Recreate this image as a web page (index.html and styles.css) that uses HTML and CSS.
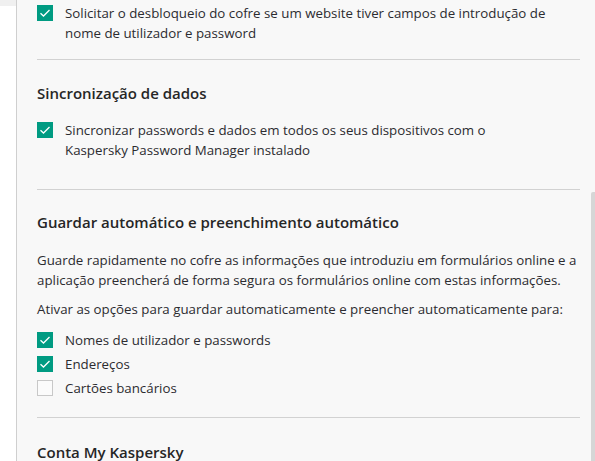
FILE: index.html
```html
<!DOCTYPE html>
<html lang="pt">
<head>
<meta charset="utf-8">
<link rel="stylesheet" href="styles.css">
</head>
<body>
<div class="app">
  <aside class="side"><div class="side-top"></div></aside>
  <main class="main">
    <label class="check row-first">
      <span class="box on"><svg viewBox="0 0 16 16"><path d="M3.5 8.2l3 2.8 6-6" /></svg></span>
      <span class="txt">Solicitar o desbloqueio do cofre se um website tiver campos de introdução de nome de utilizador e password</span>
    </label>
    <hr class="div div1">
    <h2 class="head h-sync">Sincronização de dados</h2>
    <label class="check">
      <span class="box on"><svg viewBox="0 0 16 16"><path d="M3.5 8.2l3 2.8 6-6" /></svg></span>
      <span class="txt">Sincronizar passwords e dados em todos os seus dispositivos com o Kaspersky Password Manager instalado</span>
    </label>
    <hr class="div div2">
    <h2 class="head h-auto">Guardar automático e preenchimento automático</h2>
    <p class="para p1">Guarde rapidamente no cofre as informações que introduziu em formulários online e a aplicação preencherá de forma segura os formulários online com estas informações.</p>
    <p class="para p2">Ativar as opções para guardar automaticamente e preencher automaticamente para:</p>
    <div class="list">
      <label class="check">
        <span class="box on"><svg viewBox="0 0 16 16"><path d="M3.5 8.2l3 2.8 6-6" /></svg></span>
        <span class="txt">Nomes de utilizador e passwords</span>
      </label>
      <label class="check">
        <span class="box on"><svg viewBox="0 0 16 16"><path d="M3.5 8.2l3 2.8 6-6" /></svg></span>
        <span class="txt">Endereços</span>
      </label>
      <label class="check">
        <span class="box off"></span>
        <span class="txt">Cartões bancários</span>
      </label>
    </div>
    <hr class="div div3">
    <h2 class="head h-acc">Conta My Kaspersky</h2>
  </main>
  <div class="scroll"></div>
</div>
</body>
</html>
```
FILE: styles.css
```css
html, body {
  margin: 0;
  padding: 0;
  height: 100%;
  overflow: hidden;
}
body {
  font-family: "Open Sans", "Noto Sans", sans-serif;
  color: #2c2c30;
  background: #f8f8f8;
}
.app {
  display: flex;
  height: 461px;
  position: relative;
}
.side {
  width: 16px;
  flex: 0 0 16px;
  background: #ffffff;
  border-right: 1px solid #cfcfcf;
}
.side-top {
  height: 6px;
  background: #f0f0f0;
}
.main {
  flex: 1;
  background: #f8f8f8;
  padding: 3px 15px 0 20px;
  display: flex;
  flex-direction: column;
}
.check {
  display: flex;
  align-items: flex-start;
  gap: 12px;
  font-size: 13.3px;
  line-height: 20px;
}
.box {
  flex: 0 0 16px;
  width: 16px;
  height: 16px;
  margin-top: 2px;
  box-sizing: border-box;
  display: flex;
}
.box.on {
  background: #009b82;
}
.box.off {
  border: 1px solid #c8c8c8;
  background: #fbfbfb;
}
.box svg {
  width: 16px;
  height: 16px;
}
.box path {
  fill: none;
  stroke: #ffffff;
  stroke-width: 1.3;
}
.txt {
  flex: 0 1 auto;
  max-width: 484px;
}
.div {
  border: 0;
  border-top: 1px solid #d2d2d2;
  margin: 0;
  height: 0;
}
.div1 { margin-top: 16px; }
.div2 { margin-top: 29px; }
.div3 { margin-top: 19px; }
.head {
  margin: 0;
  font-size: 15px;
  font-weight: 600;
  line-height: 22px;
  color: #262626;
}
.h-sync { margin-top: 22px; margin-bottom: 16px; }
.h-auto { margin-top: 21px; }
.h-acc { margin-top: 23px; }
.para {
  margin: 0;
  font-size: 13.3px;
  line-height: 20px;
}
.p1 { margin-top: 17px; }
.p2 { margin-top: 9px; }
.list {
  margin-top: 11px;
  display: flex;
  flex-direction: column;
  gap: 4px;
}
.scroll {
  position: absolute;
  right: 0;
  top: 192px;
  width: 4px;
  bottom: 0;
  background: #d6d6d6;
  border-radius: 2px 0 0 0;
}
```
